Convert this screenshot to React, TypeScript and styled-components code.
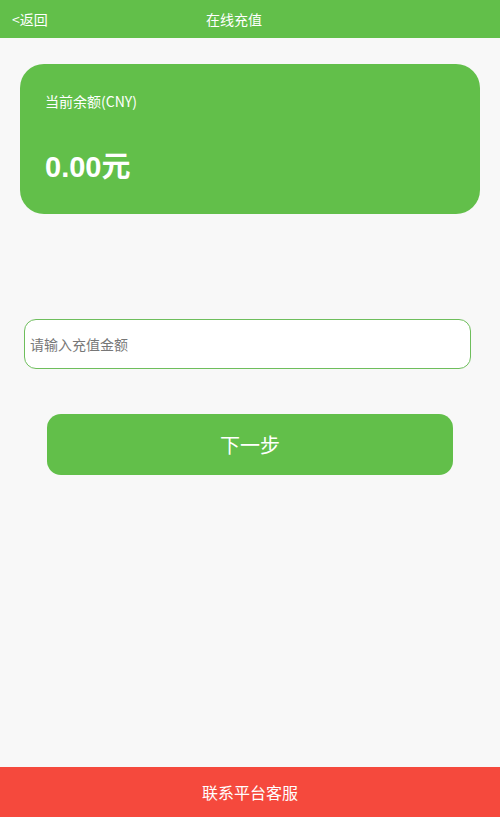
import React from "react";
import styled, { createGlobalStyle } from "styled-components";

const Global = createGlobalStyle`
  html, body { margin: 0; padding: 0; background: #f8f8f8; }
  body { font-family: "Microsoft YaHei", "Noto Sans CJK SC", "Liberation Sans", sans-serif; }
  * { box-sizing: border-box; }
`;

const Page = styled.div`
  min-height: 817px;
  display: flex;
  flex-direction: column;
  background: #f8f8f8;
`;

const Header = styled.div`
  height: 38px;
  background: #62bf4a;
  display: flex;
  align-items: center;
  color: #fff;
  font-size: 14px;
`;

const Back = styled.div`
  width: 48px;
  padding-left: 12px;
  white-space: nowrap;
`;

const Title = styled.div`
  flex: 1;
  text-align: center;
`;

const Spacer = styled.div`
  width: 80px;
`;

const Main = styled.div`
  flex: 1;
  display: flex;
  flex-direction: column;
  padding: 26px 20px 0;
`;

const Card = styled.div`
  height: 150px;
  border-radius: 24px;
  background: #62bf4a;
  color: #fff;
  padding: 28px 25px 0;
  display: flex;
  flex-direction: column;
`;

const Label = styled.div`
  font-size: 14px;
  line-height: 18px;
`;

const Amount = styled.div`
  margin-top: 37px;
  font-size: 29px;
  font-weight: bold;
  line-height: 40px;
  font-family: "Liberation Sans", "Noto Sans CJK SC", sans-serif;
`;

const Input = styled.input`
  margin: 105px 9px 0 4px;
  height: 50px;
  border: 1px solid #6ebe5c;
  border-radius: 12px;
  background: #fff;
  padding: 0 5px;
  font-size: 14px;
  font-family: "Noto Sans CJK SC", sans-serif;
  outline: none;
  &::placeholder { color: #777; }
`;

const Button = styled.button`
  margin: 45px 27px 0;
  height: 61px;
  border: none;
  border-radius: 14px;
  background: #62bf4a;
  color: #fff;
  font-size: 20px;
  font-family: "Noto Sans CJK SC", sans-serif;
`;

const Footer = styled.div`
  height: 50px;
  background: #f5493d;
  color: #fff;
  font-size: 16px;
  display: flex;
  align-items: center;
  justify-content: center;
`;

export default function App() {
  return (
    <Page>
      <Global />
      <Header>
        <Back>&lt;返回</Back>
        <Title>在线充值</Title>
        <Spacer />
      </Header>
      <Main>
        <Card>
          <Label>当前余额(CNY)</Label>
          <Amount>0.00元</Amount>
        </Card>
        <Input placeholder="请输入充值金额" />
        <Button>下一步</Button>
      </Main>
      <Footer>联系平台客服</Footer>
    </Page>
  );
}
